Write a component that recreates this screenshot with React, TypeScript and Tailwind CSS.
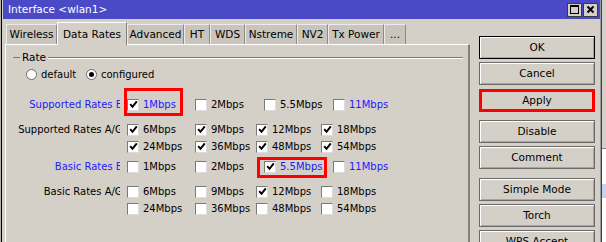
import React from "react";

type Rate = { text: string; on?: boolean; blue?: boolean; w: string; mark?: string };

const Check = ({ on }: { on?: boolean }) => (
  <span className="w-[12px] h-[12px] shrink-0 bg-white border border-t-[#7a7a7a] border-l-[#7a7a7a] border-b-[#dcdcdc] border-r-[#dcdcdc] flex items-center justify-center">
    {on && (
      <svg width="9" height="9" viewBox="0 0 9 9">
        <path d="M1.2 4.2 L3.5 6.8 L7.8 1.4" stroke="#000" strokeWidth="2" fill="none" />
      </svg>
    )}
  </span>
);

const Radio = ({ on }: { on?: boolean }) => (
  <span className="w-[11px] h-[11px] shrink-0 rounded-full bg-white border border-[#6a6a6a] flex items-center justify-center">
    {on && <span className="w-[5px] h-[5px] rounded-full bg-black" />}
  </span>
);

const Cell = ({ r }: { r: Rate }) => (
  <div className={`${r.w} relative flex items-center gap-[4px] shrink-0`}>
    <Check on={r.on} />
    <span className={r.blue ? "text-[#1a1aff]" : "text-black"}>{r.text}</span>
    {r.mark && <span className={`absolute border-[3px] border-[#ff0000] ${r.mark}`} />}
  </div>
);

const RateRow = ({ label, blue, rates, className }: { label?: string; blue?: boolean; rates: Rate[]; className?: string }) => (
  <div className={`h-[17px] flex items-center ${className ?? ""}`}>
    <div className="w-[114px] mr-[7px] overflow-hidden shrink-0">
      <div className={`w-[120px] text-right whitespace-nowrap ${blue ? "text-[#1a1aff]" : "text-black"}`}>
        {label ?? "\u00a0"}
      </div>
    </div>
    {rates.map((r) => (
      <Cell key={r.text} r={r} />
    ))}
  </div>
);

const tabs = [
  { t: "Wireless", w: "w-[51px]" },
  { t: "Data Rates", w: "w-[70px]", sel: true },
  { t: "Advanced", w: "w-[57px]" },
  { t: "HT", w: "w-[26px]" },
  { t: "WDS", w: "w-[35px]" },
  { t: "Nstreme", w: "w-[52px]" },
  { t: "NV2", w: "w-[31px]" },
  { t: "Tx Power", w: "w-[56px]" },
  { t: "...", w: "w-[22px]" },
];

const Btn = ({ children, className }: { children: React.ReactNode; className?: string }) => (
  <div
    className={`h-[23px] w-[116px] shrink-0 flex items-center justify-center text-black border border-[#6a6a6a] shadow-[inset_1px_1px_0_#ffffff,inset_-1px_-1px_0_#a8a4a0] ${className ?? ""}`}
  >
    {children}
  </div>
);

export default function App() {
  return (
    <div className="w-[606px] h-[242px] overflow-hidden flex bg-[#d4d0c8] font-['DejaVu_Sans',sans-serif] text-[10px] leading-none">
      {/* behind-window edge */}
      <div className="w-[3px] shrink-0 flex">
        <div className="w-px bg-[#b8b4ac]" />
        <div className="w-px bg-black" />
        <div className="w-px bg-[#d4d0c8]" />
      </div>

      <div className="w-[597px] shrink-0 flex flex-col">
        <div className="h-[19px] shrink-0 bg-[#4a4ac6] flex items-center pl-[5px] pr-[2px] text-white text-[10.5px]">
          <span className="flex-1">Interface &lt;wlan1&gt;</span>
          <div className="flex gap-px">
            <div className="w-[15px] h-[14px] bg-[#d4d0c8] border border-[#3a3a3a] flex items-center justify-center">
              <span className="w-[9px] h-[9px] border border-black border-t-2" />
            </div>
            <div className="w-[15px] h-[14px] bg-[#d4d0c8] border border-[#3a3a3a] flex items-center justify-center">
              <svg width="9" height="9" viewBox="0 0 9 9">
                <path d="M1.5 1.5 L7.5 7.5 M7.5 1.5 L1.5 7.5" stroke="#000" strokeWidth="2" />
              </svg>
            </div>
          </div>
        </div>

        <div className="flex flex-1 min-h-0 overflow-hidden">
          <div className="w-[476px] shrink-0 flex flex-col">
            <div className="flex items-end pl-[3px] h-[25px] shrink-0">
              {tabs.map((tb) =>
                tb.sel ? (
                  <div
                    key={tb.t}
                    className={`${tb.w} h-[23px] -mb-px z-10 bg-[#d4d0c8] border-t border-l border-white border-r border-r-[#808080] flex items-center justify-center text-[10.5px] text-black`}
                  >
                    {tb.t}
                  </div>
                ) : (
                  <div
                    key={tb.t}
                    className={`${tb.w} h-[20px] bg-[#c9c5bd] border-t border-l border-[#ecebe8] border-r border-r-[#8a8a8a] flex items-center justify-center text-[10.5px] text-black`}
                  >
                    {tb.t}
                  </div>
                )
              )}
            </div>
            <div className="ml-[2px] w-[465px] flex-1 border-t border-l border-white border-r-2 border-r-[#808080] pt-[4px]">
              <div className="h-[17px] flex items-center">
                <div className="w-[7px] ml-[7px] h-px bg-[#7a7a7a]" />
                <span className="px-[2px] text-[10.5px]">Rate</span>
                <div className="flex-1 mr-[5px] h-[2px] border-t border-[#7a7a7a] border-b border-b-white" />
              </div>
              <div className="h-[17px] flex items-center pl-[20px]">
                <Radio />
                <span className="ml-[4px] w-[45px]">default</span>
                <Radio on />
                <span className="ml-[4px]">configured</span>
              </div>

              <RateRow
                className="mt-[13px]"
                label="Supported Rates B:"
                blue
                rates={[
                  { text: "1Mbps", on: true, blue: true, w: "w-[68px]", mark: "-left-[3px] -top-[11px] w-[59px] h-[28px]" },
                  { text: "2Mbps", w: "w-[69px]" },
                  { text: "5.5Mbps", w: "w-[69px]" },
                  { text: "11Mbps", blue: true, w: "w-[68px]" },
                ]}
              />
              <RateRow
                className="mt-[8px]"
                label="Supported Rates A/G:"
                rates={[
                  { text: "6Mbps", on: true, w: "w-[68px]" },
                  { text: "9Mbps", on: true, w: "w-[61px]" },
                  { text: "12Mbps", on: true, w: "w-[65px]" },
                  { text: "18Mbps", on: true, w: "w-[68px]" },
                ]}
              />
              <RateRow
                rates={[
                  { text: "24Mbps", on: true, w: "w-[68px]" },
                  { text: "36Mbps", on: true, w: "w-[61px]" },
                  { text: "48Mbps", on: true, w: "w-[65px]" },
                  { text: "54Mbps", on: true, w: "w-[68px]" },
                ]}
              />
              <RateRow
                className="mt-[3px]"
                label="Basic Rates B:"
                blue
                rates={[
                  { text: "1Mbps", w: "w-[68px]" },
                  { text: "2Mbps", w: "w-[69px]" },
                  { text: "5.5Mbps", on: true, blue: true, w: "w-[69px]", mark: "-left-[7px] -top-[4px] w-[70px] h-[21px]" },
                  { text: "11Mbps", blue: true, w: "w-[68px]" },
                ]}
              />
              <RateRow
                className="mt-[8px]"
                label="Basic Rates A/G:"
                rates={[
                  { text: "6Mbps", w: "w-[68px]" },
                  { text: "9Mbps", w: "w-[61px]" },
                  { text: "12Mbps", on: true, w: "w-[65px]" },
                  { text: "18Mbps", w: "w-[68px]" },
                ]}
              />
              <RateRow
                rates={[
                  { text: "24Mbps", w: "w-[68px]" },
                  { text: "36Mbps", w: "w-[61px]" },
                  { text: "48Mbps", w: "w-[65px]" },
                  { text: "54Mbps", w: "w-[68px]" },
                ]}
              />
            </div>
          </div>

          <div className="w-[116px] shrink-0 flex flex-col pt-[17px] text-[10.5px]">
            <Btn className="border-black">OK</Btn>
            <Btn className="mt-[3px]">Cancel</Btn>
            <Btn className="mt-[4px] border-[3px] border-[#ff0000] shadow-none">Apply</Btn>
            <Btn className="mt-[8px]">Disable</Btn>
            <Btn className="mt-[3px]">Comment</Btn>
            <Btn className="mt-[9px]">Simple Mode</Btn>
            <Btn className="mt-[3px]">Torch</Btn>
            <Btn className="mt-[3px]">WPS Accept</Btn>
          </div>
        </div>
      </div>

      {/* window frame edge + window behind */}
      <div className="w-[6px] shrink-0 flex">
        <div className="w-px bg-[#9a9a9a]" />
        <div className="w-px bg-[#404040]" />
        <div className="flex-1 flex flex-col">
          <div className="h-[148px]" />
          <div className="h-px bg-[#808080]" />
          <div className="h-[35px] bg-white" />
          <div className="h-[14px] bg-[#c4d4f0]" />
          <div className="flex-1 bg-white" />
        </div>
      </div>
    </div>
  );
}
